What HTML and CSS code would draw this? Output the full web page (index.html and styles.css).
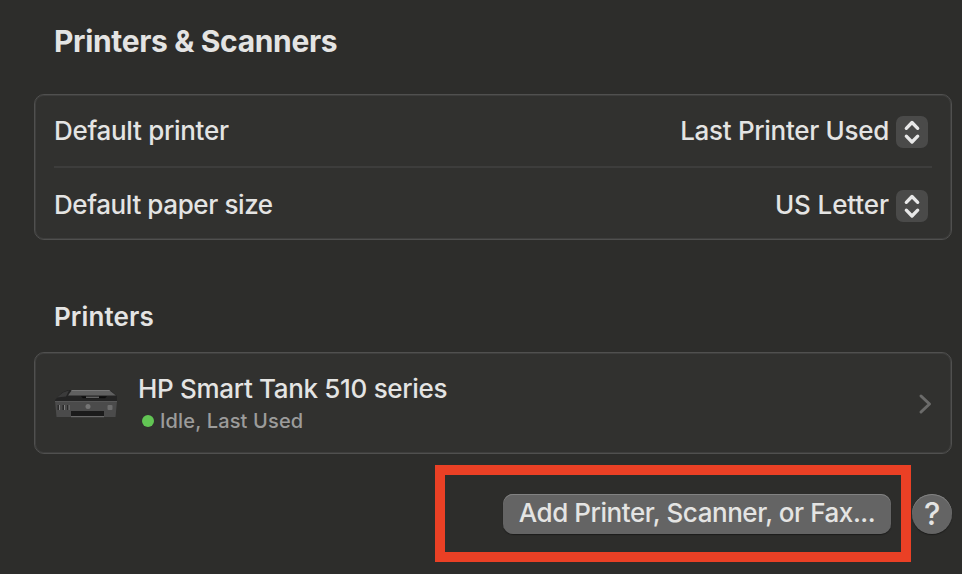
FILE: index.html
```
<!DOCTYPE html>
<html lang="en">
<head>
  <meta charset="UTF-8">
  <title>Printers &amp; Scanners</title>
  <link rel="stylesheet" href="styles.css">
</head>
<body>
  <main class="settings">
    <h1 class="page-title">Printers &amp; Scanners</h1>

    <section class="panel defaults">
      <div class="row">
        <span class="label">Default printer</span>
        <span class="value">Last Printer Used</span>
        <button class="stepper" aria-label="Choose default printer">
          <svg width="32" height="32" viewBox="0 0 32 32"><path d="M10.300 12.300 16 6.500l5.700 5.800M10.300 20.200l5.700 5.800 5.700-5.800"/></svg>
        </button>
      </div>
      <div class="row">
        <span class="label label-paper">Default paper size</span>
        <span class="value value-paper">US Letter</span>
        <button class="stepper" aria-label="Choose paper size">
          <svg width="32" height="32" viewBox="0 0 32 32"><path d="M10.300 12.300 16 6.500l5.700 5.800M10.300 20.200l5.700 5.800 5.700-5.800"/></svg>
        </button>
      </div>
    </section>

    <h2 class="section-title">Printers</h2>

    <section class="panel printer">
      <svg class="printer-icon" width="64" height="30" viewBox="0 0 64 30">
        <!-- lid and scanner glass -->
        <path d="M1 11 8 3.500 14 1h42l7 6v6H1z" fill="#242424"/>
        <path d="M18 1h37l7 5.500H14z" fill="#606060"/>
        <path d="M18 1h37l1.500 1H17z" fill="#777"/>
        <path d="M3 8.500 9 3.500l6-2-3 6z" fill="#3b3b3b"/>
        <path d="M27 7.200h26l-2 2H29z" fill="#0c0c0c"/>
        <path d="M32 8.200h13" stroke="#aaa" stroke-width=".8"/>
        <!-- body -->
        <path d="M1 12h62l-1.500 16H2.500z" fill="#4b4b4b"/>
        <path d="M1 12.500h62" stroke="#585858"/>
        <path d="M4.500 16v5M9.500 16v5M14 16v5" stroke="#2a2a2a" stroke-width="2"/>
        <path d="M5.500 16v5M10.500 16v5M15 16v5" stroke="#858585" stroke-width=".9"/>
        <circle cx="34" cy="17.500" r="2.500" fill="#757575"/>
        <rect x="53.500" y="16" width="5" height="5" rx="1" fill="#6d6d6d"/>
        <path d="M17 22h33v5.500H17z" fill="#1b1b1b"/>
        <path d="M17 27.700h33" stroke="#777"/>
      </svg>
      <div class="printer-info">
        <div class="printer-name">HP Smart Tank 510 series</div>
        <div class="printer-status"><span class="dot"></span><span>Idle, Last Used</span></div>
      </div>
      <svg class="chevron" width="14" height="22" viewBox="0 0 14 22"><path d="m3 3 8.500 8L3 19"/></svg>
    </section>

    <footer class="actions">
      <div class="highlight">
        <button class="add-button">Add Printer, Scanner, or Fax...</button>
      </div>
      <button class="help-button">?</button>
    </footer>
  </main>
</body>
</html>
```
FILE: styles.css
```
* {
  box-sizing: border-box;
}

body {
  margin: 0;
  height: 574px;
  overflow: hidden;
  background: #2d2d2b;
  color: #e4e4e3;
  font-family: Inter, "Liberation Sans", sans-serif;
  font-size: 26px;
  font-weight: 450;
  line-height: 32px;
  letter-spacing: -0.3px;
}

button {
  border: 0;
  padding: 0;
  color: inherit;
  font: inherit;
  letter-spacing: inherit;
}

.settings {
  padding: 21px 10px 0 34px;
}

.page-title {
  margin: 0 0 33px 20px;
  font-size: 30px;
  font-weight: 700;
  line-height: 40px;
  letter-spacing: -0.35px;
}

.panel {
  border: 1px solid #50504f;
  border-radius: 10px;
  background: #31312f;
  box-shadow: inset 0 0 0 1px #3e3e3d;
}

.defaults {
  height: 146px;
  padding: 1px 19px;
}

.row {
  display: flex;
  align-items: center;
  height: 70px;
  padding-right: 4px;
}

.row + .row {
  height: 76px;
  border-top: 2px solid #3d3d3c;
}

.label-paper {
  letter-spacing: -0.4px;
}

.value {
  margin-left: auto;
}

.value-paper {
  letter-spacing: -0.1px;
}

.stepper {
  width: 32px;
  height: 32px;
  margin: 2px 0 0 7px;
  border-radius: 7px;
  background: #4a4a49;
}

.stepper svg {
  display: block;
  fill: none;
  stroke: #e8e8e8;
  stroke-width: 3.3;
  stroke-linecap: round;
  stroke-linejoin: round;
}

.section-title {
  margin: 61px 0 19px 20px;
  font-size: 26px;
  font-weight: 600;
  line-height: 32px;
  letter-spacing: 0.1px;
}

.printer {
  display: flex;
  align-items: center;
  height: 102px;
  padding: 0 19px;
}

.printer-icon {
  margin-top: 2px;
}

.printer-info {
  margin-left: 20px;
}

.printer-name {
  line-height: 36px;
  letter-spacing: -0.32px;
}

.printer-status {
  display: flex;
  align-items: center;
  gap: 6px;
  padding-left: 4px;
  color: #9c9c9b;
  font-size: 20px;
  font-weight: 500;
  line-height: 28px;
  letter-spacing: 0.15px;
}

.dot {
  width: 12px;
  height: 12px;
  border-radius: 50%;
  background: #62c554;
}

.chevron {
  margin: 2px 0 0 auto;
  fill: none;
  stroke: #6b6b6a;
  stroke-width: 3;
  stroke-linecap: round;
  stroke-linejoin: round;
}

.actions {
  display: flex;
  justify-content: flex-end;
  gap: 1px;
  margin-top: 11px;
}

.highlight {
  display: flex;
  justify-content: flex-end;
  width: 476px;
  height: 97px;
  padding: 19px 10px 0 0;
  border: 10px solid #ea4025;
}

.add-button,
.help-button {
  height: 40px;
  background: #646464;
  box-shadow: inset 0 1px #828282, 0 1px 1px #1c1c1b;
}

.add-button {
  width: 388px;
  padding-bottom: 2px;
  border-radius: 10px;
  letter-spacing: -0.44px;
  white-space: nowrap;
}

.help-button {
  width: 40px;
  margin-top: 29px;
  border-radius: 50%;
  font-size: 31px;
  font-weight: 500;
}
```
